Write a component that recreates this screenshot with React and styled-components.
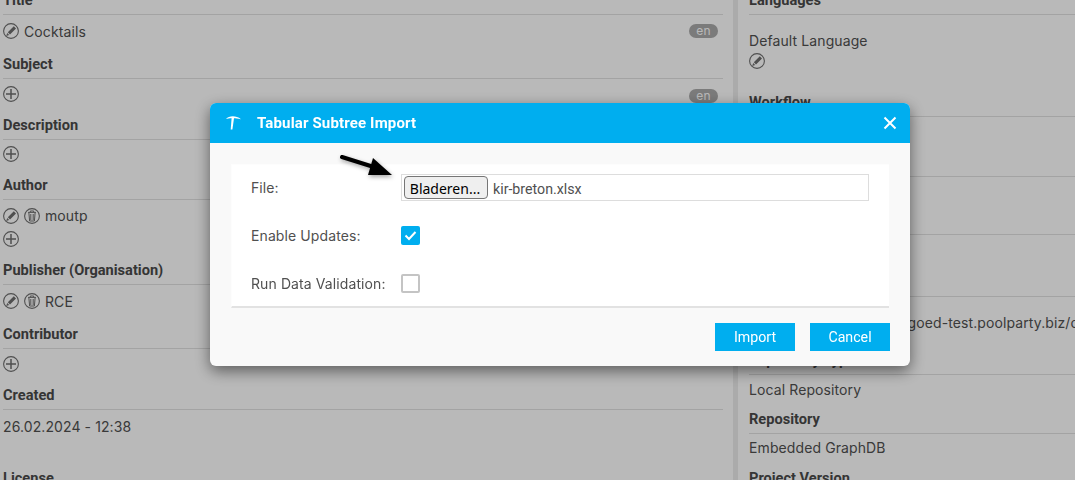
import React from "react";
import styled, { createGlobalStyle } from "styled-components";

const Global = createGlobalStyle`
  html, body { margin: 0; padding: 0; height: 100%; overflow: hidden; background: #fff; }
  body { font-family: Inter, "Liberation Sans", sans-serif; font-size: 14px; letter-spacing: .1px; color: #505050; }
`;

const Page = styled.div`
  height: 480px; overflow: hidden; display: grid;
  grid-template-columns: 733px 5px 337px; background: #fff;
`;
const LeftColumn = styled.div`margin-top: -15px; padding: 0 10px 0 3px;`;
const Divider = styled.div`background: #ececec; height: 480px;`;
const RightColumn = styled.div`margin-top: -15px; padding-left: 11px; overflow: hidden;`;
const Section = styled.section``;
const Heading = styled.h3`
  margin: 0; height: 29px; border-bottom: 1px solid #e1e1e1;
  font: 700 14.6px/30px Roboto, sans-serif; letter-spacing: 0; color: #4a4a4a; white-space: nowrap;
`;
const Body = styled.div`
  height: ${p => p.$h}px; box-sizing: border-box;
  padding-top: ${p => p.$pad ?? 0}px; padding-bottom: ${p => p.$up ?? 0}px;
  position: relative; display: flex; flex-direction: column;
  justify-content: ${p => (p.$pad === undefined ? "center" : "flex-start")};
`;
const Row = styled.div`
  display: flex; align-items: center; gap: 5px; height: ${p => p.$h ?? 23}px; white-space: nowrap;
`;
const Badge = styled.span`
  position: absolute; right: 5px; top: ${p => p.$top}px; width: 29px; height: 14px;
  border-radius: 7px; background: #aaa; color: #fff; font-size: 12px; line-height: 14px; text-align: center;
`;
const Overlay = styled.div`position: fixed; inset: 0; background: rgba(0,0,0,.275);`;
const Modal = styled.div`
  position: fixed; left: 210px; top: 103px; width: 700px; height: 263px; border-radius: 6px;
  background: #f9f9f9; box-shadow: 0 5px 15px rgba(0,0,0,.5); overflow: hidden;
  display: flex; flex-direction: column;
`;
const ModalHeader = styled.header`
  height: 40px; flex: none; background: #00aeef; color: #fff; display: flex; align-items: center;
  padding: 0 13px 0 14px; gap: 15px;
`;
const ModalTitle = styled.h2`margin: 0; flex: 1; font: 700 15px Roboto, sans-serif; letter-spacing: .15px; color: #fff;`;
const Close = styled.button`border: 0; background: none; padding: 0; height: 14px; color: #fff; display: flex;`;
const ModalBody = styled.div`padding: 21px 21px 0; flex: 1;`;
const Panel = styled.div`
  height: 144px; box-sizing: border-box; background: #fff; border: 1px solid #fdfdfd; border-width: 1px 0 0 1px;
  border-bottom: 2px solid #e2e2e2; padding: 9px 19px 0;
`;
const FormRow = styled.div`
  display: grid; grid-template-columns: 150px 468px; align-items: center;
  height: ${p => p.$h}px; margin-top: ${p => p.$mt ?? 0}px;
`;
const Label = styled.label`color: #505050;`;
const FileBox = styled.div`
  height: 27px; box-sizing: border-box; border: 1px solid #ddd; padding-left: 2px;
  display: flex; align-items: center; gap: 5px; color: #505050;
  font: 14.2px Roboto, sans-serif; letter-spacing: 0;
`;
const FileName = styled.span`padding-top: 3px;`;
const Browse = styled.button`
  width: 84px; height: 23px; padding: 1px 2px 0 0; box-sizing: border-box; border: 1px solid #767676; border-radius: 4px;
  background: #efefef; color: #000; font: 14px "Noto Sans", sans-serif;
`;
const Check = styled.span`
  width: 19px; height: 19px; box-sizing: border-box; border-radius: 2px; display: flex;
  align-items: center; justify-content: center;
  background: ${p => (p.$on ? "#00aeef" : "#fff")};
  border: ${p => (p.$on ? "0" : "2px solid #c4c4c4")};
`;
const Footer = styled.footer`display: flex; justify-content: flex-end; gap: 15px; padding: 0 20px 15px;`;
const Action = styled.button`
  width: 80px; height: 28px; border: 0; padding: 0; background: #00aeef; color: #fff;
  font: 14.2px Roboto, sans-serif;
`;
const Arrow = styled.svg`position: fixed; left: 335px; top: 150px; filter: drop-shadow(1px 2px 2px rgba(0,0,0,.35));`;

const Circle = () => <circle cx="8" cy="8" r="7.4" fill="none" stroke="currentColor" strokeWidth="1.1" />;
const IconSvg = styled.svg`flex: none; color: #6e6e6e; width: 16px; height: 16px;`;
const Edit = () => (
  <IconSvg viewBox="0 0 16 16"><Circle />
    <path d="M10.8 3.2 13 5.4 7 11.4 4.8 9.2ZM4.2 10 6.2 12 3.2 13Z" fill="currentColor" />
  </IconSvg>
);
const Trash = () => (
  <IconSvg viewBox="0 0 16 16"><Circle />
    <path d="M4 4.4h8M6.3 4.2V3h3.4v1.2M4.9 5l.7 8h4.8l.7-8M6.8 6v6M9.2 6v6" fill="none" stroke="currentColor" strokeWidth="1" />
  </IconSvg>
);
const Plus = () => (
  <IconSvg viewBox="0 0 16 16"><Circle />
    <path d="M8 3v10M3 8h10" fill="none" stroke="currentColor" strokeWidth="1.5" />
  </IconSvg>
);

const left = [
  { title: "Title", h: 34, up: 2, content: <><Row><Edit />Cocktails</Row><Badge $top={9}>en</Badge></> },
  { title: "Subject", h: 31, up: 2, content: <><Row><Plus /></Row><Badge $top={10}>en</Badge></> },
  { title: "Description", h: 30, up: 2, content: <Row><Plus /></Row> },
  { title: "Author", h: 55, pad: 4, content: <><Row><Edit /><Trash />moutp</Row><Row><Plus /></Row></> },
  { title: "Publisher (Organisation)", h: 34, up: 2, content: <Row><Edit /><Trash />RCE</Row> },
  { title: "Contributor", h: 31, up: 2, content: <Row><Plus /></Row> },
  { title: "Created", h: 53, pad: 5, content: <Row>26.02.2024 - 12:38</Row> },
  { title: "License", h: 30, content: null },
];
const right = [
  { title: "Languages", h: 72, pad: 14, content: <><Row>Default Language</Row><Row $h={18}><Edit /></Row></> },
  { title: "Workflow", h: 30 },
  { title: "", h: 28 },
  { title: "", h: 32 },
  { title: "", h: 48, pad: 14, content: <Row>https://data.cultureelerfgoed-test.poolparty.biz/cocktails</Row> },
  { title: "Repository Type", h: 29, content: <Row>Local Repository</Row> },
  { title: "Repository", h: 29, up: 2, content: <Row>Embedded GraphDB</Row> },
  { title: "Project Version", h: 30 },
];

const Fields = ({ items }) => items.map((s, i) => (
  <Section key={i}>
    <Heading>{s.title || "\u00a0"}</Heading>
    <Body $h={s.h} $pad={s.pad} $up={s.up}>{s.content}</Body>
  </Section>
));

export default function App() {
  return (
    <>
      <Global />
      <Page>
        <LeftColumn><Fields items={left} /></LeftColumn>
        <Divider />
        <RightColumn><Fields items={right} /></RightColumn>
      </Page>
      <Overlay />
      <Modal>
        <ModalHeader>
          <svg width="18" height="18" viewBox="0 0 18 18">
            <path d="M2 5C5 1.5 12 1.2 17 5.2 13.5 4.4 11.5 4.2 10 4.2L8.4 15.5H6.7L7.6 4.2C5.5 4.2 3.5 4.4 2 5Z" fill="#fff" />
          </svg>
          <ModalTitle>Tabular Subtree Import</ModalTitle>
          <Close aria-label="Close">
            <svg width="14" height="14" viewBox="0 0 14 14">
              <path d="M1.5 1.5l11 11M12.5 1.5l-11 11" stroke="#fff" strokeWidth="2" fill="none" />
            </svg>
          </Close>
        </ModalHeader>
        <ModalBody>
          <Panel>
            <FormRow $h={27}><Label>File:</Label>
              <FileBox><Browse>Bladeren...</Browse><FileName>kir-breton.xlsx</FileName></FileBox>
            </FormRow>
            <FormRow $h={47} $mt={11}><Label>Enable Updates:</Label>
              <Check $on>
                <svg width="13" height="11" viewBox="0 0 13 11"><path d="M1.5 5.5 5 9 11.5 2" stroke="#fff" strokeWidth="2" fill="none" /></svg>
              </Check>
            </FormRow>
            <FormRow $h={47} $mt={1}><Label>Run Data Validation:</Label><Check /></FormRow>
          </Panel>
        </ModalBody>
        <Footer><Action>Import</Action><Action>Cancel</Action></Footer>
      </Modal>
      <Arrow width="70" height="35" viewBox="0 0 70 35">
        <path d="M7 7 42 18" stroke="#000" strokeWidth="4" strokeLinecap="round" fill="none" />
        <path d="M57 25 38 8 33 25Z" fill="#000" />
      </Arrow>
    </>
  );
}
